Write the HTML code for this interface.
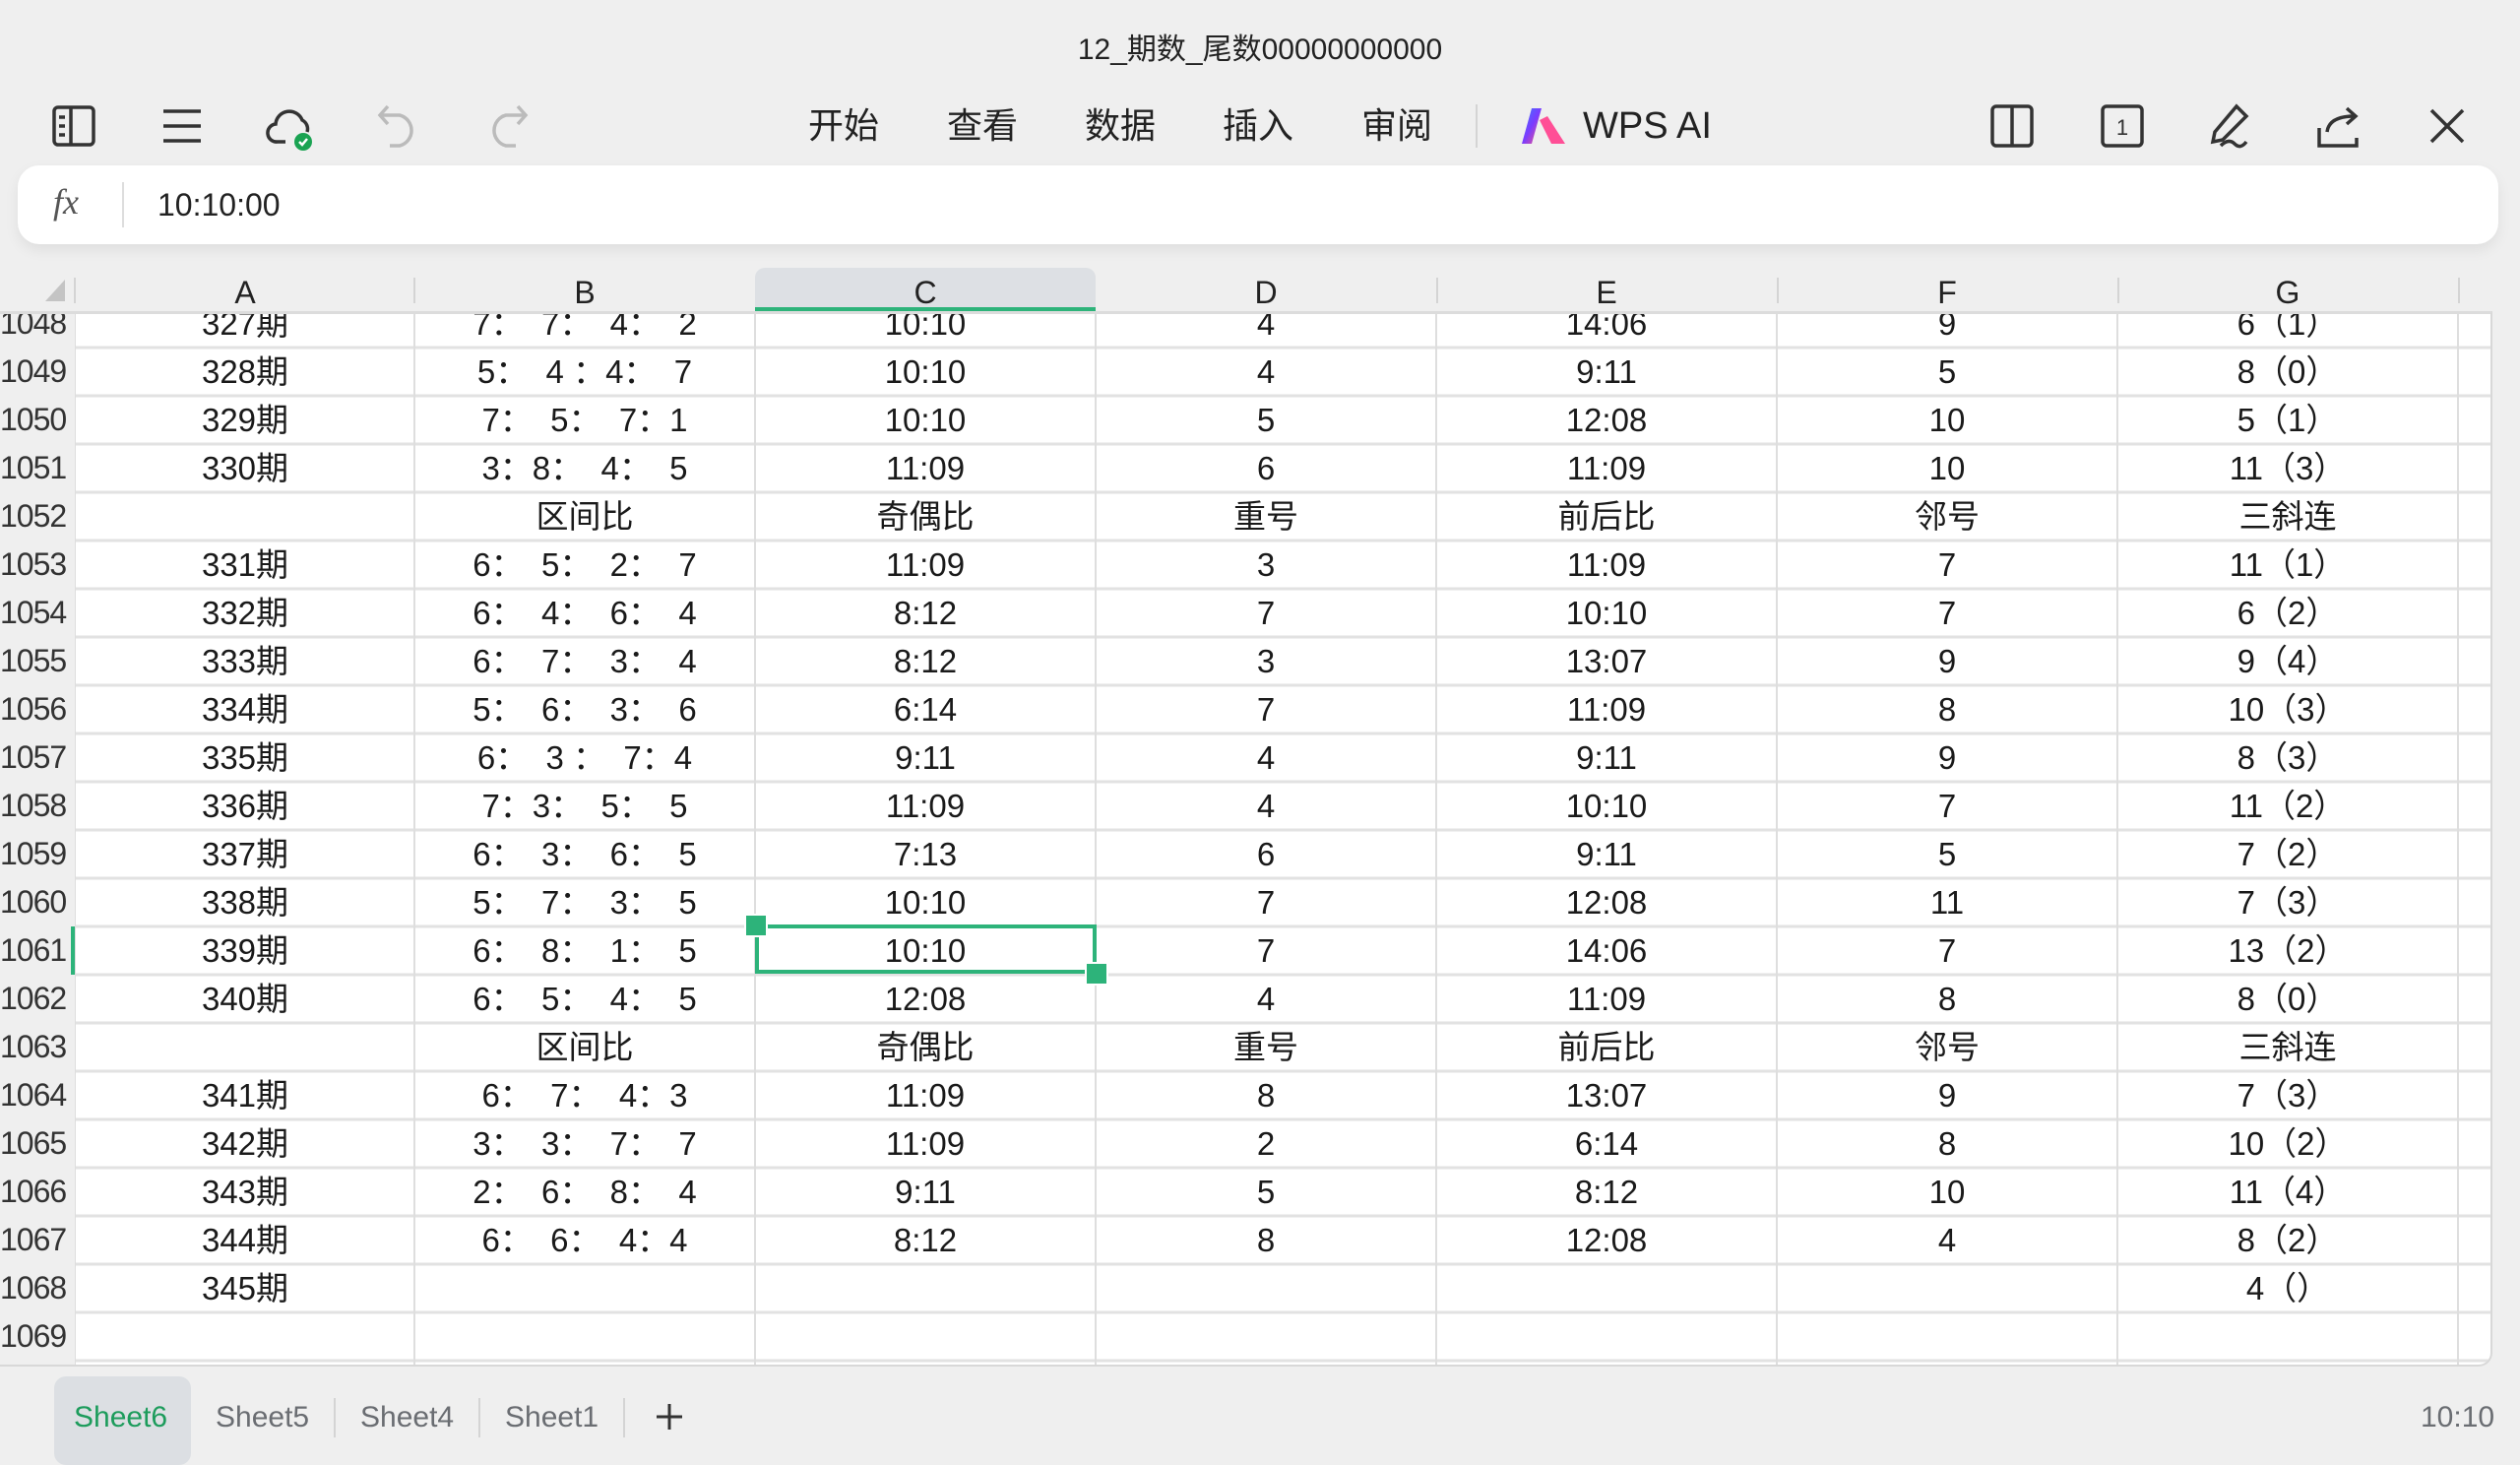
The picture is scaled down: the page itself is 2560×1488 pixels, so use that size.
<!DOCTYPE html>
<html><head><meta charset="utf-8"><style>
*{margin:0;padding:0;box-sizing:border-box}
body{width:2560px;height:1477px;background:#efefef;position:relative;overflow:hidden;font-family:"Liberation Sans","Noto Sans CJK SC",sans-serif;color:#1a1a1a}
.abs{position:absolute}
.title{left:0;width:2560px;top:25px;text-align:center;font-size:30px;color:#222}
.menu{top:104px;font-size:36px;color:#222;line-height:48px}
.fx{left:18px;top:168px;width:2520px;height:80px;background:#fff;border-radius:22px;box-shadow:0 6px 14px rgba(0,0,0,0.07)}
.hdr{top:275px;height:44px;font-size:32px;line-height:44px;text-align:center;color:#222}
.row{position:absolute;left:0;height:49px;width:2560px}
.c{position:absolute;top:0;height:49px;line-height:49px;text-align:center;font-size:33px;white-space:pre;width:346px}
.rn{position:absolute;left:0;width:76px;height:49px;line-height:49px;font-size:32px;color:#333;background:#efefef;overflow:hidden;white-space:nowrap;letter-spacing:-1px}
.tab{top:1423px;font-size:30px;color:#6a6d72}
.sep{width:2px;background:#d4d4d4}
</style></head><body>
<div class="abs title">12_期数_尾数00000000000</div>
<svg class="abs" style="left:52px;top:105px" width="46" height="46" viewBox="0 0 46 46" fill="none" stroke="#333" stroke-width="3.5"><rect x="3" y="4" width="40" height="38" rx="4"/><line x1="20" y1="4" x2="20" y2="42"/><line x1="8" y1="14" x2="14" y2="14"/><line x1="8" y1="23" x2="14" y2="23"/><line x1="8" y1="32" x2="14" y2="32"/></svg>
<svg class="abs" style="left:164px;top:108px" width="42" height="40" viewBox="0 0 42 40" stroke="#333" stroke-width="3.5"><line x1="2" y1="5" x2="40" y2="5"/><line x1="2" y1="20" x2="40" y2="20"/><line x1="2" y1="35" x2="40" y2="35"/></svg>
<svg class="abs" style="left:270px;top:104px" width="52" height="50" viewBox="0 0 52 50" fill="none"><path d="M20 40 H12 A9 9 0 0 1 10 22 A14 14 0 0 1 37 18 A10 10 0 0 1 42 30" stroke="#333" stroke-width="3.5"/><circle cx="38" cy="40" r="9" fill="#1aa352"/><path d="M34 40 l3 3 l5 -6" stroke="#fff" stroke-width="2.5"/></svg>
<svg class="abs" style="left:382px;top:104px" width="46" height="48" viewBox="0 0 46 48" fill="none" stroke="#bbb" stroke-width="3.5"><path d="M12 4 L4 13 L12 22"/><path d="M4 13 H24 A16 16 0 0 1 24 44 H14"/></svg>
<svg class="abs" style="left:492px;top:104px" width="46" height="48" viewBox="0 0 46 48" fill="none" stroke="#bbb" stroke-width="3.5"><path d="M34 4 L42 13 L34 22"/><path d="M42 13 H22 A16 16 0 0 0 22 44 H32"/></svg>
<div class="abs menu" style="left:821px">开始</div>
<div class="abs menu" style="left:962px">查看</div>
<div class="abs menu" style="left:1102px">数据</div>
<div class="abs menu" style="left:1242px">插入</div>
<div class="abs menu" style="left:1383px">审阅</div>
<div class="abs sep" style="left:1499px;top:106px;height:44px"></div>
<svg class="abs" style="left:1542px;top:108px" width="52" height="40" viewBox="0 0 52 40"><defs><linearGradient id="g" x1="0" y1="0" x2="1" y2="1"><stop offset="0" stop-color="#3b7bff"/><stop offset="0.5" stop-color="#7a3cff"/><stop offset="1" stop-color="#ff5a7a"/></linearGradient></defs><path d="M14 2 H24 L14 38 H4 Z" fill="url(#g)"/><path d="M22 14 L34 38 H48 L30 10 Z" fill="#ff4f96"/></svg>
<div class="abs menu" style="left:1608px;font-size:38px">WPS AI</div>
<svg class="abs" style="left:2022px;top:106px" width="44" height="44" viewBox="0 0 44 44" fill="none" stroke="#333" stroke-width="3.5"><rect x="2" y="2" width="40" height="40" rx="4"/><line x1="22" y1="2" x2="22" y2="42"/></svg>
<svg class="abs" style="left:2134px;top:106px" width="44" height="44" viewBox="0 0 44 44" fill="none" stroke="#333" stroke-width="3.5"><rect x="2" y="2" width="40" height="40" rx="4"/><text x="22" y="31" font-size="22" text-anchor="middle" fill="#333" stroke="none" font-family="Liberation Sans">1</text></svg>
<svg class="abs" style="left:2242px;top:104px" width="46" height="48" viewBox="0 0 46 48" fill="none" stroke="#333" stroke-width="3.5"><path d="M30 4 L40 14 L16 38 L6 40 L8 30 Z"/><path d="M14 44 Q22 36 28 42 T40 40"/></svg>
<svg class="abs" style="left:2352px;top:104px" width="48" height="48" viewBox="0 0 48 48" fill="none" stroke="#333" stroke-width="3.5"><path d="M4 26 V44 H42 V36"/><path d="M12 30 Q14 14 40 14"/><path d="M32 6 L41 14 L32 22"/></svg>
<svg class="abs" style="left:2466px;top:108px" width="40" height="40" viewBox="0 0 40 40" stroke="#333" stroke-width="3.5"><line x1="4" y1="4" x2="36" y2="36"/><line x1="36" y1="4" x2="4" y2="36"/></svg>
<div class="abs fx"></div>
<div class="abs" style="left:54px;top:184px;font-size:36px;font-style:italic;font-family:'Liberation Serif',serif;color:#555">fx</div>
<div class="abs sep" style="left:124px;top:185px;height:46px;background:#ddd"></div>
<div class="abs" style="left:160px;top:190px;font-size:32px;color:#222">10:10:00</div>
<div class="abs" style="left:0;top:272px;width:2560px;height:44px;background:#efefef"></div>
<div class="abs" style="left:767px;top:272px;width:346px;height:44px;background:#dde0e4;border-radius:10px 10px 0 0"></div>
<div class="abs" style="left:767px;top:312px;width:346px;height:5px;background:#2db37a"></div>
<svg class="abs" style="left:44px;top:282px" width="24" height="26"><path d="M22 2 V24 H2 Z" fill="#c4c4c4"/></svg>
<div class="abs sep" style="left:75px;top:282px;height:26px"></div>
<div class="abs hdr" style="left:76px;width:346px">A</div>
<div class="abs sep" style="left:420px;top:282px;height:26px"></div>
<div class="abs hdr" style="left:421px;width:346px">B</div>
<div class="abs hdr" style="left:767px;width:346px">C</div>
<div class="abs hdr" style="left:1113px;width:346px">D</div>
<div class="abs sep" style="left:1459px;top:282px;height:26px"></div>
<div class="abs hdr" style="left:1459px;width:346px">E</div>
<div class="abs sep" style="left:1805px;top:282px;height:26px"></div>
<div class="abs hdr" style="left:1805px;width:346px">F</div>
<div class="abs sep" style="left:2151px;top:282px;height:26px"></div>
<div class="abs hdr" style="left:2151px;width:346px">G</div>
<div class="abs sep" style="left:2497px;top:282px;height:26px"></div>
<div class="abs" style="left:0;top:316px;width:2532px;height:1072px;overflow:hidden;background:#fff;border-right:2px solid #d8d8d8;border-bottom:2px solid #d8d8d8;border-top:3px solid #dcdcdc;border-radius:0 0 14px 0">
<div style="position:absolute;left:0;top:-15px;width:2560px;height:1100px">
<svg style="position:absolute;left:0;top:0" width="2560" height="1100">
<g stroke="#e2e2e2" stroke-width="3">
<line x1="0" y1="49" x2="2560" y2="49"/><line x1="0" y1="98" x2="2560" y2="98"/><line x1="0" y1="147" x2="2560" y2="147"/><line x1="0" y1="196" x2="2560" y2="196"/><line x1="0" y1="245" x2="2560" y2="245"/><line x1="0" y1="294" x2="2560" y2="294"/><line x1="0" y1="343" x2="2560" y2="343"/><line x1="0" y1="392" x2="2560" y2="392"/><line x1="0" y1="441" x2="2560" y2="441"/><line x1="0" y1="490" x2="2560" y2="490"/><line x1="0" y1="539" x2="2560" y2="539"/><line x1="0" y1="588" x2="2560" y2="588"/><line x1="0" y1="637" x2="2560" y2="637"/><line x1="0" y1="686" x2="2560" y2="686"/><line x1="0" y1="735" x2="2560" y2="735"/><line x1="0" y1="784" x2="2560" y2="784"/><line x1="0" y1="833" x2="2560" y2="833"/><line x1="0" y1="882" x2="2560" y2="882"/><line x1="0" y1="931" x2="2560" y2="931"/><line x1="0" y1="980" x2="2560" y2="980"/><line x1="0" y1="1029" x2="2560" y2="1029"/><line x1="0" y1="1078" x2="2560" y2="1078"/>
</g>
<g stroke="#dedede" stroke-width="2">
<line x1="76" y1="0" x2="76" y2="1100"/><line x1="421" y1="0" x2="421" y2="1100"/><line x1="767" y1="0" x2="767" y2="1100"/><line x1="1113" y1="0" x2="1113" y2="1100"/><line x1="1459" y1="0" x2="1459" y2="1100"/><line x1="1805" y1="0" x2="1805" y2="1100"/><line x1="2151" y1="0" x2="2151" y2="1100"/><line x1="2497" y1="0" x2="2497" y2="1100"/>
</g>
</svg>
<div class="row" style="top:0"><div class="rn">1048</div><div class="c" style="left:76px">327期</div><div class="c" style="left:421px">7：  7：  4：  2</div><div class="c" style="left:767px">10:10</div><div class="c" style="left:1113px">4</div><div class="c" style="left:1459px">14:06</div><div class="c" style="left:1805px">9</div><div class="c" style="left:2151px">6（1）</div></div>
<div class="row" style="top:49px"><div class="rn">1049</div><div class="c" style="left:76px">328期</div><div class="c" style="left:421px">5：  4 ：4：  7</div><div class="c" style="left:767px">10:10</div><div class="c" style="left:1113px">4</div><div class="c" style="left:1459px">9:11</div><div class="c" style="left:1805px">5</div><div class="c" style="left:2151px">8（0）</div></div>
<div class="row" style="top:98px"><div class="rn">1050</div><div class="c" style="left:76px">329期</div><div class="c" style="left:421px">7：  5：  7：1</div><div class="c" style="left:767px">10:10</div><div class="c" style="left:1113px">5</div><div class="c" style="left:1459px">12:08</div><div class="c" style="left:1805px">10</div><div class="c" style="left:2151px">5（1）</div></div>
<div class="row" style="top:147px"><div class="rn">1051</div><div class="c" style="left:76px">330期</div><div class="c" style="left:421px">3：8：  4：  5</div><div class="c" style="left:767px">11:09</div><div class="c" style="left:1113px">6</div><div class="c" style="left:1459px">11:09</div><div class="c" style="left:1805px">10</div><div class="c" style="left:2151px">11（3）</div></div>
<div class="row" style="top:196px"><div class="rn">1052</div><div class="c" style="left:421px">区间比</div><div class="c" style="left:767px">奇偶比</div><div class="c" style="left:1113px">重号</div><div class="c" style="left:1459px">前后比</div><div class="c" style="left:1805px">邻号</div><div class="c" style="left:2151px">三斜连</div></div>
<div class="row" style="top:245px"><div class="rn">1053</div><div class="c" style="left:76px">331期</div><div class="c" style="left:421px">6：  5：  2：  7</div><div class="c" style="left:767px">11:09</div><div class="c" style="left:1113px">3</div><div class="c" style="left:1459px">11:09</div><div class="c" style="left:1805px">7</div><div class="c" style="left:2151px">11（1）</div></div>
<div class="row" style="top:294px"><div class="rn">1054</div><div class="c" style="left:76px">332期</div><div class="c" style="left:421px">6：  4：  6：  4</div><div class="c" style="left:767px">8:12</div><div class="c" style="left:1113px">7</div><div class="c" style="left:1459px">10:10</div><div class="c" style="left:1805px">7</div><div class="c" style="left:2151px">6（2）</div></div>
<div class="row" style="top:343px"><div class="rn">1055</div><div class="c" style="left:76px">333期</div><div class="c" style="left:421px">6：  7：  3：  4</div><div class="c" style="left:767px">8:12</div><div class="c" style="left:1113px">3</div><div class="c" style="left:1459px">13:07</div><div class="c" style="left:1805px">9</div><div class="c" style="left:2151px">9（4）</div></div>
<div class="row" style="top:392px"><div class="rn">1056</div><div class="c" style="left:76px">334期</div><div class="c" style="left:421px">5：  6：  3：  6</div><div class="c" style="left:767px">6:14</div><div class="c" style="left:1113px">7</div><div class="c" style="left:1459px">11:09</div><div class="c" style="left:1805px">8</div><div class="c" style="left:2151px">10（3）</div></div>
<div class="row" style="top:441px"><div class="rn">1057</div><div class="c" style="left:76px">335期</div><div class="c" style="left:421px">6：  3 ：  7：4</div><div class="c" style="left:767px">9:11</div><div class="c" style="left:1113px">4</div><div class="c" style="left:1459px">9:11</div><div class="c" style="left:1805px">9</div><div class="c" style="left:2151px">8（3）</div></div>
<div class="row" style="top:490px"><div class="rn">1058</div><div class="c" style="left:76px">336期</div><div class="c" style="left:421px">7：3：  5：  5</div><div class="c" style="left:767px">11:09</div><div class="c" style="left:1113px">4</div><div class="c" style="left:1459px">10:10</div><div class="c" style="left:1805px">7</div><div class="c" style="left:2151px">11（2）</div></div>
<div class="row" style="top:539px"><div class="rn">1059</div><div class="c" style="left:76px">337期</div><div class="c" style="left:421px">6：  3：  6：  5</div><div class="c" style="left:767px">7:13</div><div class="c" style="left:1113px">6</div><div class="c" style="left:1459px">9:11</div><div class="c" style="left:1805px">5</div><div class="c" style="left:2151px">7（2）</div></div>
<div class="row" style="top:588px"><div class="rn">1060</div><div class="c" style="left:76px">338期</div><div class="c" style="left:421px">5：  7：  3：  5</div><div class="c" style="left:767px">10:10</div><div class="c" style="left:1113px">7</div><div class="c" style="left:1459px">12:08</div><div class="c" style="left:1805px">11</div><div class="c" style="left:2151px">7（3）</div></div>
<div class="row" style="top:637px"><div class="rn" style="border-right:4px solid #2db37a">1061</div><div class="c" style="left:76px">339期</div><div class="c" style="left:421px">6：  8：  1：  5</div><div class="c" style="left:767px">10:10</div><div class="c" style="left:1113px">7</div><div class="c" style="left:1459px">14:06</div><div class="c" style="left:1805px">7</div><div class="c" style="left:2151px">13（2）</div></div>
<div class="row" style="top:686px"><div class="rn">1062</div><div class="c" style="left:76px">340期</div><div class="c" style="left:421px">6：  5：  4：  5</div><div class="c" style="left:767px">12:08</div><div class="c" style="left:1113px">4</div><div class="c" style="left:1459px">11:09</div><div class="c" style="left:1805px">8</div><div class="c" style="left:2151px">8（0）</div></div>
<div class="row" style="top:735px"><div class="rn">1063</div><div class="c" style="left:421px">区间比</div><div class="c" style="left:767px">奇偶比</div><div class="c" style="left:1113px">重号</div><div class="c" style="left:1459px">前后比</div><div class="c" style="left:1805px">邻号</div><div class="c" style="left:2151px">三斜连</div></div>
<div class="row" style="top:784px"><div class="rn">1064</div><div class="c" style="left:76px">341期</div><div class="c" style="left:421px">6：  7：  4：3</div><div class="c" style="left:767px">11:09</div><div class="c" style="left:1113px">8</div><div class="c" style="left:1459px">13:07</div><div class="c" style="left:1805px">9</div><div class="c" style="left:2151px">7（3）</div></div>
<div class="row" style="top:833px"><div class="rn">1065</div><div class="c" style="left:76px">342期</div><div class="c" style="left:421px">3：  3：  7：  7</div><div class="c" style="left:767px">11:09</div><div class="c" style="left:1113px">2</div><div class="c" style="left:1459px">6:14</div><div class="c" style="left:1805px">8</div><div class="c" style="left:2151px">10（2）</div></div>
<div class="row" style="top:882px"><div class="rn">1066</div><div class="c" style="left:76px">343期</div><div class="c" style="left:421px">2：  6：  8：  4</div><div class="c" style="left:767px">9:11</div><div class="c" style="left:1113px">5</div><div class="c" style="left:1459px">8:12</div><div class="c" style="left:1805px">10</div><div class="c" style="left:2151px">11（4）</div></div>
<div class="row" style="top:931px"><div class="rn">1067</div><div class="c" style="left:76px">344期</div><div class="c" style="left:421px">6：  6：  4：4</div><div class="c" style="left:767px">8:12</div><div class="c" style="left:1113px">8</div><div class="c" style="left:1459px">12:08</div><div class="c" style="left:1805px">4</div><div class="c" style="left:2151px">8（2）</div></div>
<div class="row" style="top:980px"><div class="rn">1068</div><div class="c" style="left:76px">345期</div><div class="c" style="left:2151px">4（）</div></div>
<div class="row" style="top:1029px"><div class="rn">1069</div></div>
<div class="row" style="top:1078px"><div class="rn"></div></div>
</div></div>
<div class="abs" style="left:767px;top:939px;width:347px;height:50px;border:4px solid #2db37a"></div>
<div class="abs" style="left:758px;top:930px;width:20px;height:20px;background:#2db37a;outline:2px solid #fff"></div>
<div class="abs" style="left:1104px;top:979px;width:20px;height:20px;background:#2db37a;outline:2px solid #fff"></div>
<div class="abs" style="left:55px;top:1398px;width:139px;height:90px;background:#dcdfe3;border-radius:12px"></div>
<div class="abs tab" style="left:75px;color:#1d9c5c">Sheet6</div>
<div class="abs tab" style="left:219px">Sheet5</div>
<div class="abs sep" style="left:339px;top:1420px;height:40px"></div>
<div class="abs tab" style="left:366px">Sheet4</div>
<div class="abs sep" style="left:486px;top:1420px;height:40px"></div>
<div class="abs tab" style="left:513px">Sheet1</div>
<div class="abs sep" style="left:633px;top:1420px;height:40px"></div>
<svg class="abs" style="left:666px;top:1425px" width="28" height="28" stroke="#333" stroke-width="3"><line x1="14" y1="1" x2="14" y2="27"/><line x1="1" y1="14" x2="27" y2="14"/></svg>
<div class="abs tab" style="left:2459px">10:10</div>
</body></html>
